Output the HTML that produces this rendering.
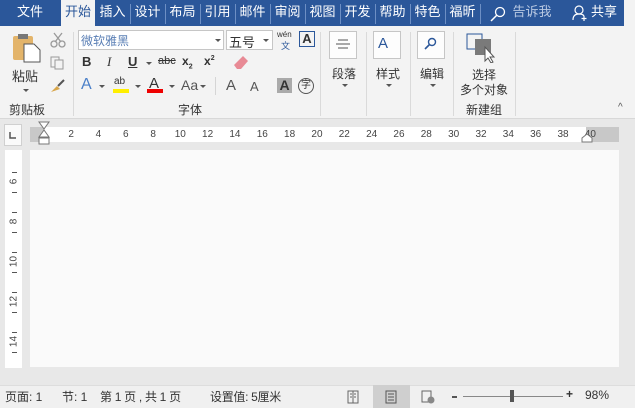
<!DOCTYPE html>
<html><head><meta charset="utf-8"><style>
*{margin:0;padding:0;box-sizing:border-box}
body{width:635px;height:408px;overflow:hidden;background:#e8e8e8;font-family:"Liberation Sans","Noto Sans CJK SC",sans-serif;position:relative;font-size:12px;color:#333}
.a{position:absolute}
.tabs{left:0;top:0;width:635px;height:26px;background:#2b579a}
.tab{position:absolute;top:0;height:26px;line-height:24px;color:#fff;font-size:13px;text-align:center}
.sep{position:absolute;top:4px;width:1px;height:20px;background:#6d8fc4}
.rib{left:0;top:26px;width:635px;height:93px;background:#f3f3f3;border-bottom:1px solid #d8d8d8}
.vs{position:absolute;top:32px;width:1px;height:84px;background:#dadada}
.t{position:absolute;font-size:12px;color:#333;white-space:nowrap}
.box{position:absolute;width:28px;height:28px;border:1px solid #c6c6c6;background:#fdfdfd}
.caret{position:absolute;width:0;height:0;border-left:3px solid transparent;border-right:3px solid transparent;border-top:3px solid #555}
</style></head><body>
<div class="a tabs">
 <div class="tab" style="left:0;width:60px">文件</div>
 <div class="tab" style="left:61px;width:34px;background:#f3f3f3;color:#2b579a">开始</div>
 <div class="tab" style="left:96px;width:33px">插入</div><div class="sep" style="left:130px"></div>
 <div class="tab" style="left:131px;width:33px">设计</div><div class="sep" style="left:165px"></div>
 <div class="tab" style="left:166px;width:33px">布局</div><div class="sep" style="left:200px"></div>
 <div class="tab" style="left:201px;width:33px">引用</div><div class="sep" style="left:235px"></div>
 <div class="tab" style="left:236px;width:33px">邮件</div><div class="sep" style="left:270px"></div>
 <div class="tab" style="left:271px;width:33px">审阅</div><div class="sep" style="left:305px"></div>
 <div class="tab" style="left:306px;width:33px">视图</div><div class="sep" style="left:340px"></div>
 <div class="tab" style="left:341px;width:33px">开发</div><div class="sep" style="left:375px"></div>
 <div class="tab" style="left:376px;width:33px">帮助</div><div class="sep" style="left:410px"></div>
 <div class="tab" style="left:411px;width:33px">特色</div><div class="sep" style="left:445px"></div>
 <div class="tab" style="left:446px;width:33px;overflow:hidden">福昕</div><div class="sep" style="left:480px"></div>
 <svg class="a" style="left:490px;top:6px" width="16" height="16"><circle cx="10" cy="6" r="4.5" fill="none" stroke="#fff" stroke-width="1.3"/><line x1="7" y1="9" x2="1" y2="15" stroke="#fff" stroke-width="1.5"/></svg>
 <div class="tab" style="left:512px;width:40px;color:#b8c8e2">告诉我</div>
 <svg class="a" style="left:572px;top:5px" width="16" height="16"><circle cx="7" cy="5" r="4" fill="none" stroke="#fff" stroke-width="1.2"/><path d="M1 15 Q1 9 7 9 Q11 9 12 11" fill="none" stroke="#fff" stroke-width="1.2"/><path d="M12 11v5M9.5 13.5h5" stroke="#fff" stroke-width="1.2"/></svg>
 <div class="tab" style="left:590px;width:28px">共享</div>
 <div class="a" style="left:624px;top:0;width:11px;height:26px;background:#f3f3f3"></div>
</div>
<div class="a rib"></div>
<svg class="a" style="left:11px;top:33px" width="32" height="30"><rect x="2" y="3" width="20" height="24" rx="2" fill="#e3b46a"/><rect x="7" y="1" width="10" height="5" fill="#777"/><path d="M13 11h10l6 6v12H13z" fill="#fff" stroke="#555"/></svg>
<div class="t" style="left:12px;top:66px;font-size:13px">粘贴</div>
<div class="caret" style="left:23px;top:89px"></div>
<svg class="a" style="left:50px;top:32px" width="16" height="16"><circle cx="4" cy="12" r="3" fill="none" stroke="#999" stroke-width="1.3"/><circle cx="12" cy="12" r="3" fill="none" stroke="#999" stroke-width="1.3"/><path d="M5 10 L12 1 M11 10 L4 1" stroke="#999" stroke-width="1.3"/></svg>
<svg class="a" style="left:50px;top:56px" width="14" height="14"><rect x="1" y="1" width="8" height="10" fill="none" stroke="#999"/><rect x="5" y="4" width="8" height="9" fill="#f3f3f3" stroke="#999"/></svg>
<svg class="a" style="left:50px;top:79px" width="16" height="14"><path d="M1 13 L7 7 L10 10 Z" fill="#d8a64a"/><path d="M8 7 L14 1" stroke="#555" stroke-width="2"/></svg>
<div class="t" style="left:9px;top:101px">剪贴板</div>
<div class="vs" style="left:73px"></div>
<div class="a" style="left:78px;top:30px;width:146px;height:20px;border:1px solid #c6c6c6;background:#fff"></div>
<div class="t" style="left:81px;top:32px;color:#5a7fb5">微软雅黑</div>
<div class="caret" style="left:215px;top:39px"></div>
<div class="a" style="left:226px;top:30px;width:47px;height:20px;border:1px solid #c6c6c6;background:#fff"></div>
<div class="t" style="left:229px;top:32px;font-size:13px">五号</div>
<div class="caret" style="left:263px;top:39px"></div>
<div class="t" style="left:277px;top:30px;font-size:8px">wén</div>
<div class="t" style="left:281px;top:39px;font-size:9px;color:#2b579a">文</div>
<div class="a" style="left:299px;top:31px;width:16px;height:16px;border:1px solid #2b579a;font-size:13px;font-weight:bold;text-align:center;line-height:14px;color:#333">A</div>
<div class="t" style="left:82px;top:54px;font-weight:bold;font-size:13px">B</div>
<div class="t" style="left:107px;top:54px;font-style:italic;font-size:13px;font-family:'Liberation Serif',serif">I</div>
<div class="t" style="left:128px;top:54px;text-decoration:underline;font-size:13px;font-weight:bold">U</div>
<div class="caret" style="left:146px;top:62px"></div>
<div class="t" style="left:158px;top:55px;text-decoration:line-through;font-size:11px">abc</div>
<div class="t" style="left:182px;top:54px;font-weight:bold">x<sub style="font-size:7px">2</sub></div>
<div class="t" style="left:204px;top:54px;font-weight:bold">x<sup style="font-size:7px">2</sup></div>
<svg class="a" style="left:232px;top:53px" width="18" height="18"><path d="M5 16 L2 12 L11 3 L16 8 L9 16Z" fill="#e88a95"/></svg>
<div class="t" style="left:81px;top:76px;font-size:16px;color:#4a7fc8">A</div>
<div class="caret" style="left:99px;top:85px"></div>
<div class="t" style="left:114px;top:76px;font-size:10px">ab</div>
<div class="a" style="left:113px;top:89px;width:16px;height:4px;background:#ffef00"></div>
<div class="caret" style="left:135px;top:85px"></div>
<div class="t" style="left:149px;top:75px;font-size:15px">A</div>
<div class="a" style="left:147px;top:89px;width:16px;height:4px;background:#e00"></div>
<div class="caret" style="left:169px;top:85px"></div>
<div class="t" style="left:181px;top:77px;font-size:14px;color:#555">Aa</div>
<div class="caret" style="left:200px;top:85px"></div>
<div class="a" style="left:215px;top:77px;width:1px;height:18px;background:#d5d5d5"></div>
<div class="t" style="left:226px;top:77px;font-size:15px;color:#555">A</div>
<div class="t" style="left:250px;top:79px;font-size:13px;color:#555">A</div>
<div class="a" style="left:277px;top:78px;width:15px;height:15px;background:#aaa;color:#333;font-weight:bold;font-size:14px;text-align:center;line-height:15px">A</div>
<div class="a" style="left:298px;top:78px;width:16px;height:16px;border:1px solid #555;border-radius:50%;font-size:10px;text-align:center;line-height:14px">字</div>
<div class="t" style="left:178px;top:101px">字体</div>
<div class="vs" style="left:320px"></div>
<div class="box" style="left:329px;top:31px"></div>
<svg class="a" style="left:335px;top:39px" width="16" height="12"><path d="M3 1h10M1 5h14M3 9h10" stroke="#555"/></svg>
<div class="t" style="left:332px;top:65px">段落</div><div class="caret" style="left:342px;top:84px"></div>
<div class="vs" style="left:366px"></div>
<div class="box" style="left:373px;top:31px"></div>
<div class="t" style="left:378px;top:35px;font-size:15px;color:#2b579a">A</div>
<div class="t" style="left:376px;top:65px">样式</div><div class="caret" style="left:386px;top:84px"></div>
<div class="vs" style="left:410px"></div>
<div class="box" style="left:417px;top:31px"></div>
<svg class="a" style="left:424px;top:37px" width="14" height="14"><circle cx="8" cy="5" r="3.5" fill="none" stroke="#2b579a" stroke-width="1.4"/><line x1="5.5" y1="7.5" x2="1" y2="12" stroke="#2b579a" stroke-width="1.6"/></svg>
<div class="t" style="left:420px;top:65px">编辑</div><div class="caret" style="left:430px;top:84px"></div>
<div class="vs" style="left:453px"></div>
<svg class="a" style="left:466px;top:33px" width="34" height="30"><rect x="1" y="1" width="15" height="15" fill="none" stroke="#2b579a"/><rect x="9" y="6" width="16" height="16" fill="#7a7a7a"/><path d="M19 14 L19 28 L22 25 L25 30 L27 29 L24 24 L28 24Z" fill="#fff" stroke="#555"/></svg>
<div class="t" style="left:472px;top:66px">选择</div>
<div class="t" style="left:460px;top:81px">多个对象</div>
<div class="t" style="left:466px;top:101px">新建组</div>
<div class="vs" style="left:515px"></div>
<div class="t" style="left:618px;top:102px;font-size:10px;color:#555">^</div>
<div class="a" style="left:4px;top:124px;width:18px;height:22px;background:#fafafa;border:1px solid #d0d0d0"></div>
<svg class="a" style="left:8px;top:131px" width="10" height="10"><path d="M2 1v6h6" fill="none" stroke="#555" stroke-width="1.5"/></svg>
<div class="a" style="left:30px;top:127px;width:589px;height:15px;background:#fff"></div>
<div class="a" style="left:30px;top:127px;width:14px;height:15px;background:#c8c8c8"></div>
<div class="a" style="left:586px;top:127px;width:33px;height:15px;background:#c8c8c8"></div>
<div id="nums"></div>
<svg class="a" style="left:38px;top:121px" width="13" height="30"><path d="M1 1h10L6 8Z M6 9L1 16h10Z" fill="#fff" stroke="#777"/><rect x="1" y="17" width="10" height="6" fill="#fff" stroke="#777"/></svg>
<svg class="a" style="left:581px;top:133px" width="12" height="10"><path d="M1 9V5L6 1l5 4v4Z" fill="#fff" stroke="#777"/></svg>
<div class="a" style="left:5px;top:150px;width:17px;height:218px;background:#fff"></div>
<div id="vnums"></div>
<div class="a" style="left:30px;top:150px;width:589px;height:217px;background:#fafafa"></div>
<div class="a" style="left:0;top:385px;width:635px;height:23px;background:#f0f0f0;border-top:1px solid #ddd"></div>
<div class="t" style="left:5px;top:388px">页面: 1</div>
<div class="t" style="left:62px;top:388px">节: 1</div>
<div class="t" style="left:100px;top:388px;letter-spacing:-0.3px">第 1 页 , 共 1 页</div>
<div class="t" style="left:210px;top:388px;letter-spacing:-0.3px">设置值: 5厘米</div>
<svg class="a" style="left:347px;top:390px" width="12" height="14"><rect x="1" y="1" width="10" height="12" fill="none" stroke="#666"/><path d="M6 1v12M3 4h2M3 7h2M7 4h2M7 7h2" stroke="#666"/></svg>
<div class="a" style="left:373px;top:385px;width:37px;height:23px;background:#cfcfcf"></div>
<svg class="a" style="left:385px;top:390px" width="12" height="14"><rect x="1" y="1" width="10" height="12" fill="none" stroke="#555"/><path d="M3 4h6M3 7h6M3 10h6" stroke="#555"/></svg>
<svg class="a" style="left:421px;top:390px" width="14" height="14"><rect x="1" y="1" width="9" height="11" fill="none" stroke="#666"/><circle cx="10" cy="10" r="3.5" fill="#888"/></svg>
<div class="a" style="left:452px;top:396px;width:5px;height:2px;background:#555"></div>
<div class="a" style="left:463px;top:396px;width:100px;height:1px;background:#888"></div>
<div class="a" style="left:510px;top:390px;width:4px;height:12px;background:#555"></div>
<div class="t" style="left:566px;top:387px;font-weight:bold">+</div>
<div class="t" style="left:585px;top:388px">98%</div>
<script>
var h='';for(var n=2;n<=40;n+=2){var x=44+n*13.67;h+='<div class="t" style="left:'+(x-(n<10?3:6))+'px;top:129px;font-size:10px;color:#444">'+n+'</div>';}
document.getElementById('nums').innerHTML=h;
var v='';var ys={6:182,8:222,10:262,12:302,14:342};for(var k in ys){v+='<div class="t" style="left:6px;top:'+(ys[k]-6)+'px;font-size:10px;color:#444;transform:rotate(-90deg);width:16px;text-align:center">'+k+'</div>';v+='<div class="a" style="left:12px;top:'+(ys[k]-10)+'px;width:5px;height:1px;background:#555"></div><div class="a" style="left:12px;top:'+(ys[k]+10)+'px;width:5px;height:1px;background:#555"></div>';}
document.getElementById('vnums').innerHTML=v;
</script>
</body></html>
